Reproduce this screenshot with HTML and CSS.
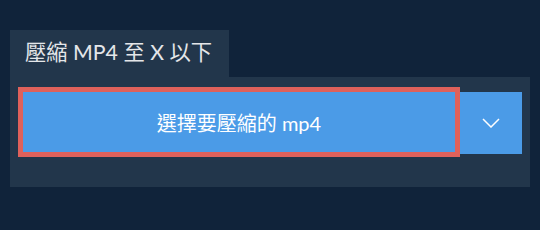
FILE: index.html
```html
<!DOCTYPE html>
<html lang="zh-Hant">
<head>
<meta charset="utf-8">
<link rel="stylesheet" href="styles.css">
</head>
<body>
<div class="widget">
  <div class="tab">壓縮 MP4 至 X 以下</div>
  <div class="panel">
    <button class="choose">選擇要壓縮的 mp4</button>
    <button class="more" aria-label="more">
      <svg width="18" height="10" viewBox="0 0 18 10"><polyline points="1,1 9,9 17,1" fill="none" stroke="#fff" stroke-width="1.5"/></svg>
    </button>
  </div>
</div>
</body>
</html>
```

FILE: styles.css
```css
html, body {
  margin: 0;
  padding: 0;
  background: #10233a;
  width: 540px;
  height: 230px;
  overflow: hidden;
}
.widget {
  padding: 30px 10px 0 10px;
  font-family: Lato, "Noto Sans CJK TC", sans-serif;
  font-weight: 400;
}
.tab {
  width: 219px;
  height: 47px;
  box-sizing: border-box;
  background: #22364b;
  color: #e4e6e9;
  font-size: 21.3px;
  line-height: 44px;
  padding-left: 15px;
  white-space: nowrap;
}
.panel {
  background: #22364b;
  height: 110px;
  box-sizing: border-box;
  padding: 10px 8px 0 8px;
  display: flex;
  align-items: flex-start;
}
.choose {
  width: 442px;
  height: 70px;
  box-sizing: border-box;
  border: 5px solid #df615b;
  background: #4b9be7;
  color: #fff;
  font-family: Lato, "Noto Sans CJK TC", sans-serif;
  font-weight: 400;
  font-size: 20px;
  padding: 0;
  margin: 0;
}
.more {
  width: 62px;
  height: 62px;
  margin: 5px 0 0 0;
  padding: 0;
  border: none;
  background: #4b9be7;
  display: flex;
  align-items: center;
  justify-content: center;
}
.more svg {
  display: block;
}
```
